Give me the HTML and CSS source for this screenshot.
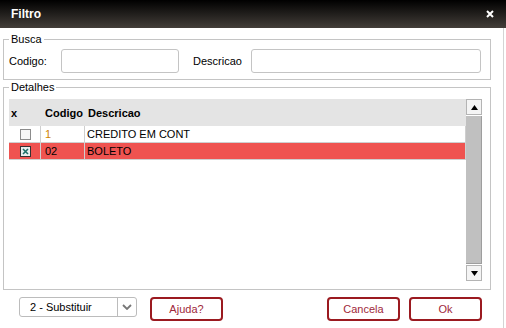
FILE: index.html
```html
<!DOCTYPE html>
<html lang="pt">
<head>
    <meta charset="UTF-8">
    <title>Filtro</title>
    <link rel="stylesheet" href="styles.css">
</head>
<body>
    <div class="titlebar">
        <span class="title">Filtro</span>
        <svg class="close" width="8" height="8" viewBox="0 0 8 8"><path d="M1 1 L7 7 M7 1 L1 7" stroke="#fff" stroke-width="2"/></svg>
    </div>

    <div class="content">
        <fieldset class="box busca">
            <legend>Busca</legend>
            <div class="search-row">
                <label class="lbl-codigo">Codigo:</label>
                <input class="field field-codigo" type="text">
                <label class="lbl-desc">Descricao</label>
                <input class="field field-desc" type="text">
            </div>
        </fieldset>

        <fieldset class="box detalhes">
            <legend>Detalhes</legend>
            <div class="grid">
                <div class="grid-body">
                    <div class="grid-head">
                        <div class="c1">x</div>
                        <div class="c2">Codigo</div>
                        <div class="c3">Descricao</div>
                    </div>
                    <div class="grid-row">
                        <div class="c1">
                            <svg width="11" height="11" viewBox="0 0 11 11"><rect x="0.5" y="0.5" width="10" height="10" fill="#f7f7f7" stroke="#8c8c8c"/></svg>
                        </div>
                        <div class="c2 code-link">1</div>
                        <div class="c3">CREDITO EM CONT</div>
                    </div>
                    <div class="grid-row selected">
                        <div class="c1">
                            <svg width="11" height="11" viewBox="0 0 11 11"><rect x="0.5" y="0.5" width="10" height="10" fill="#e8eeee" stroke="#333"/><path d="M3 3 L8 8 M8 3 L3 8" stroke="#1f6f68" stroke-width="1.6"/></svg>
                        </div>
                        <div class="c2">02</div>
                        <div class="c3">BOLETO</div>
                    </div>
                </div>
                <div class="scrollbar">
                    <div class="sb-btn">
                        <svg width="7" height="5" viewBox="0 0 7 5"><path d="M3.5 0 L7 5 L0 5 Z" fill="#000"/></svg>
                    </div>
                    <div class="sb-thumb"></div>
                    <div class="sb-btn">
                        <svg width="7" height="5" viewBox="0 0 7 5"><path d="M0 0 L7 0 L3.5 5 Z" fill="#000"/></svg>
                    </div>
                </div>
            </div>
        </fieldset>

        <div class="actions">
            <div class="select">
                <span class="select-text">2 - Substituir</span>
                <span class="select-arrow">
                    <svg width="10" height="6" viewBox="0 0 10 6"><path d="M1 1 L5 5 L9 1" fill="none" stroke="#777" stroke-width="1.8"/></svg>
                </span>
            </div>
            <button class="btn">Ajuda?</button>
            <button class="btn btn-cancel">Cancela</button>
            <button class="btn">Ok</button>
        </div>
    </div>
</body>
</html>
```

FILE: styles.css
```css
body {
    margin: 0;
    font-family: "Liberation Sans", Arial, sans-serif;
    font-size: 11px;
    color: #000;
    background: #fff;
}
.titlebar {
    height: 28px;
    display: flex;
    align-items: center;
    justify-content: space-between;
    padding: 0 12px 0 11px;
    background: linear-gradient(#000, #433e39);
    color: #fff;
}
.title {
    font-weight: bold;
    font-size: 12px;
}
.content {
    width: 504px;
    height: 300px;
    box-sizing: border-box;
    padding: 4px 0 0 3px;
    border-right: 1px solid #d4d4d4;
}
.box {
    width: 488px;
    box-sizing: border-box;
    margin: 0;
    border: 1px solid #c4c4c4;
}
.box legend {
    padding: 0 2px;
    line-height: 14px;
}
.busca {
    padding: 3px 9px 6px 5px;
}
.search-row {
    display: flex;
    align-items: center;
    height: 24px;
}
.lbl-codigo { width: 52px; }
.lbl-desc { width: 58px; margin-left: 14px; }
.field {
    height: 24px;
    box-sizing: border-box;
    border: 1px solid #c4c4c4;
    border-radius: 3px;
    padding: 0 4px;
    font: inherit;
}
.field-codigo { width: 118px; }
.field-desc { width: 230px; }

.detalhes {
    padding: 5px 8px 8px 5px;
}
.grid {
    display: flex;
    height: 182px;
}
.grid-body {
    flex: 1;
}
.grid-head {
    display: flex;
    align-items: center;
    height: 27px;
    background: #e4e4e4;
    font-weight: bold;
}
.grid-head .c1 { padding-left: 2px; }
.grid-head .c3 { padding-left: 3px; }
.grid-row {
    display: flex;
    align-items: center;
    height: 16px;
    border-bottom: 1px solid #cfcfcf;
    border-right: 1px solid #cfcfcf;
}
.grid-row.selected {
    background: #ef5350;
}
.c1 {
    width: 32px;
    box-sizing: border-box;
    height: 100%;
    display: flex;
    align-items: center;
}
.grid-row .c1 {
    justify-content: center;
    padding-left: 1px;
    border-right: 1px solid #cfcfcf;
}
.c2 {
    width: 44px;
    box-sizing: border-box;
    padding-left: 4px;
}
.grid-row .c2 {
    height: 100%;
    display: flex;
    align-items: center;
    padding-left: 4px;
    border-right: 1px solid #cfcfcf;
}
.c3 {
    padding-left: 2px;
}
.code-link {
    color: #d08400;
}
.scrollbar {
    width: 16px;
    display: flex;
    flex-direction: column;
}
.sb-btn {
    height: 16px;
    box-sizing: border-box;
    border: 1px solid #b4b4b4;
    background: #f4f4f4;
    display: flex;
    align-items: center;
    justify-content: center;
}
.sb-thumb {
    flex: 1;
    margin: 1px 0;
    background: #c0c0c0;
    border-right: 1px solid #9e9e9e;
    border-bottom: 1px solid #9e9e9e;
}

.actions {
    display: flex;
    align-items: flex-start;
    margin-top: 7px;
    padding: 0 21px 0 16px;
}
.select {
    width: 118px;
    height: 20px;
    box-sizing: border-box;
    border: 1px solid #bcbcbc;
    border-radius: 3px;
    display: flex;
    align-items: center;
}
.select-text {
    flex: 1;
    padding-left: 10px;
}
.select-arrow {
    width: 18px;
    height: 100%;
    border-left: 1px solid #bcbcbc;
    display: flex;
    align-items: center;
    justify-content: center;
}
.btn {
    width: 73px;
    height: 24px;
    margin-left: 9px;
    border: 2px solid #9b1a20;
    border-radius: 4px;
    background: #fff;
    color: #a0283a;
    font: inherit;
    cursor: pointer;
}
.select + .btn { margin-left: 13px; }
.btn-cancel { margin-left: auto; }
```
